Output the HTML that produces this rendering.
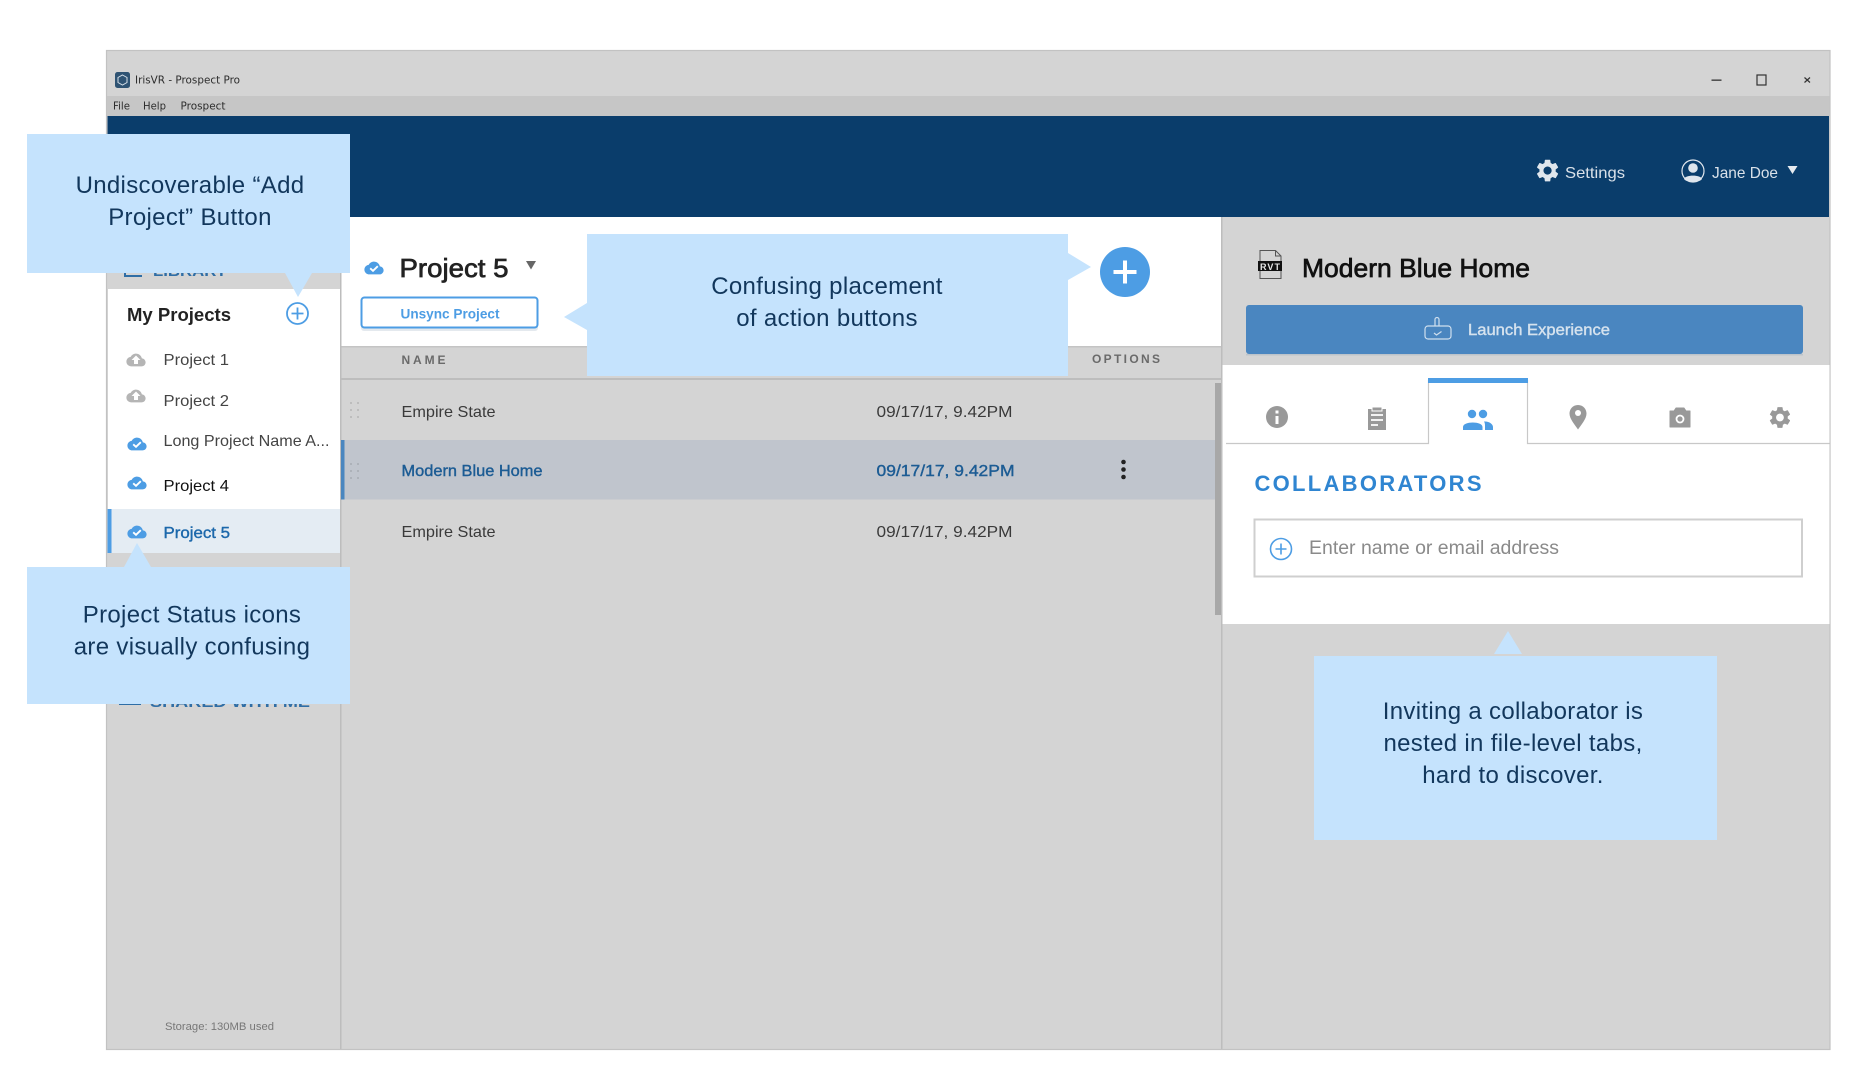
<!DOCTYPE html>
<html><head><meta charset="utf-8"><title>IrisVR - Prospect Pro</title>
<style>
html,body{margin:0;padding:0;background:#fff;width:1873px;height:1091px;overflow:hidden}
svg{display:block}
text{font-family:"Liberation Sans",sans-serif;white-space:pre}
.c{font-size:24px;fill:#12375c;text-anchor:middle;letter-spacing:.32px}
.m{stroke-width:.4px}
.h{stroke-width:.7px}
</style></head><body>
<svg xmlns="http://www.w3.org/2000/svg" width="1873" height="1091" viewBox="0 0 1873 1091">
<defs>
<path id="cl" transform="translate(-9.6,-9.6) scale(.8)" d="M19.35 10.04C18.67 6.59 15.64 4 12 4 9.11 4 6.6 5.64 5.35 8.04 2.34 8.36 0 10.91 0 14c0 3.31 2.69 6 6 6h13c2.76 0 5-2.24 5-5 0-2.64-2.05-4.78-4.65-4.96z"/>
<g id="up"><use href="#cl" fill="#b5b5b5"/><path d="M0,-4.500 L4.500,0 L2,0 L2,4 L-2,4 L-2,0 L-4.500,0Z" fill="#fff"/></g>
<g id="ok"><use href="#cl" fill="#4d9de4"/><path d="M-3.800,.3 L-1,2.800 L3.800,-1.800" fill="none" stroke="#fff" stroke-width="1.900"/></g>
<path id="gear" d="M19.14 12.94c.04-.3.06-.61.06-.94 0-.32-.02-.64-.07-.94l2.03-1.58c.18-.14.23-.41.12-.61l-1.92-3.32c-.12-.22-.37-.29-.59-.22l-2.39.96c-.5-.38-1.03-.7-1.62-.94l-.36-2.54c-.04-.24-.24-.41-.48-.41h-3.84c-.24 0-.43.17-.47.41l-.36 2.54c-.59.24-1.13.57-1.62.94l-2.39-.96c-.22-.08-.47 0-.59.22L2.74 8.87c-.12.21-.08.47.12.61l2.03 1.58c-.05.3-.09.63-.09.94s.02.64.07.94l-2.03 1.58c-.18.14-.23.41-.12.61l1.92 3.32c.12.22.37.29.59.22l2.39-.96c.5.38 1.03.7 1.62.94l.36 2.54c.05.24.24.41.48.41h3.84c.24 0 .44-.17.47-.41l.36-2.54c.59-.24 1.13-.56 1.62-.94l2.39.96c.22.08.47 0 .59-.22l1.92-3.32c.12-.22.07-.47-.12-.61l-2.01-1.58zM12 15.6c-1.98 0-3.6-1.62-3.6-3.6s1.62-3.6 3.6-3.6 3.6 1.62 3.6 3.6-1.62 3.6-3.6 3.6z"/>
<g id="drag"><rect x="0" y="0" width="2" height="2"/><rect x="7" y="0" width="2" height="2"/><rect x="0" y="7" width="2" height="2"/><rect x="7" y="7" width="2" height="2"/><rect x="0" y="14" width="2" height="2"/><rect x="7" y="14" width="2" height="2"/></g>
</defs>

<!-- window -->
<rect x="106.500" y="50.500" width="1723.500" height="999" fill="#d4d4d4" stroke="#c2c2c2" stroke-width="1.200"/>
<rect x="107" y="96" width="1722.500" height="20" fill="#c6c6c6"/>
<rect x="107.500" y="116" width="1721.500" height="101" fill="#0a3d6b"/>
<!-- title bar -->
<rect x="115" y="72" width="15" height="16" rx="2.500" fill="#2f5373"/>
<path d="M122.500,75 L127,77.500 V82.500 L122.500,85 L118,82.500 V77.500Z" fill="none" stroke="#d5dfe8" stroke-width="1"/>
<text x="135" y="83.500" font-size="11" textLength="105" lengthAdjust="spacingAndGlyphs" fill="#2c2c2c" style='font-family:"DejaVu Sans",sans-serif'>IrisVR - Prospect Pro</text>
<text x="113" y="109.500" font-size="11" textLength="17" lengthAdjust="spacingAndGlyphs" fill="#2c2c2c" style='font-family:"DejaVu Sans",sans-serif'>File</text>
<text x="143" y="109.500" font-size="11" textLength="23" lengthAdjust="spacingAndGlyphs" fill="#2c2c2c" style='font-family:"DejaVu Sans",sans-serif'>Help</text>
<text x="180.500" y="109.500" font-size="11" textLength="45" lengthAdjust="spacingAndGlyphs" fill="#2c2c2c" style='font-family:"DejaVu Sans",sans-serif'>Prospect</text>
<rect x="1711.500" y="79.500" width="10" height="1.300" fill="#333"/>
<rect x="1757" y="75" width="9" height="10" fill="none" stroke="#333" stroke-width="1.200"/>
<path d="M1804.500,77.500 L1810,82.500 M1810,77.500 L1804.500,82.500" stroke="#333" stroke-width="1.200"/>
<!-- header right -->
<use href="#gear" transform="translate(1534,157) scale(1.130)" fill="#dfe6ed"/>
<text x="1565" y="178" font-size="16" textLength="60" lengthAdjust="spacingAndGlyphs" fill="#d9e1e9">Settings</text>
<circle cx="1693" cy="171" r="11" fill="none" stroke="#dfe6ed" stroke-width="1.200"/>
<circle cx="1693" cy="168" r="4.800" fill="#dfe6ed"/>
<path d="M1684,179 C1685,174.500 1701,174.500 1702,179 C1699,183 1687,183 1684,179Z" fill="#dfe6ed"/>
<text x="1712" y="178" font-size="16" textLength="66" lengthAdjust="spacingAndGlyphs" fill="#d9e1e9">Jane Doe</text>
<polygon points="1787.500,166 1797.500,166 1792.500,174" fill="#e6ebf0"/>

<!-- sidebar -->
<rect x="108" y="289" width="232" height="264" fill="#fff"/>
<rect x="108" y="509" width="232" height="44" fill="#e4ecf3"/>
<rect x="107.500" y="509" width="4" height="44" fill="#4d9de4"/>
<rect x="340" y="217" width="1.500" height="832" fill="#bdbdbd"/>
<path d="M125,262 h17 M125,262 v14 h17" fill="none" stroke="#2f6ea6" stroke-width="2"/>
<text x="153" y="276" font-size="15" textLength="74" lengthAdjust="spacingAndGlyphs" fill="#2f6ea6" font-weight="bold">LIBRARY</text>
<text x="127" y="321" font-size="18" textLength="104" lengthAdjust="spacingAndGlyphs" fill="#222" font-weight="bold">My Projects</text>
<circle cx="297.500" cy="313.500" r="10.500" fill="#fff" stroke="#4d9de4" stroke-width="1.800"/>
<path d="M291.500,313.500 h12 M297.500,307.500 v12" stroke="#4d9de4" stroke-width="1.800"/>
<use href="#up" x="136" y="360"/>
<use href="#up" x="136" y="396"/>
<use href="#ok" x="137" y="444"/>
<use href="#ok" x="137" y="483"/>
<use href="#ok" x="137" y="532"/>
<text x="163.500" y="365" font-size="16" textLength="65.500" lengthAdjust="spacingAndGlyphs" fill="#444">Project 1</text>
<text x="163.500" y="406" font-size="16" textLength="65.500" lengthAdjust="spacingAndGlyphs" fill="#444">Project 2</text>
<text x="163.500" y="446" font-size="16" textLength="166" lengthAdjust="spacingAndGlyphs" fill="#444">Long Project Name A...</text>
<text x="163.500" y="491" font-size="16" textLength="65.500" lengthAdjust="spacingAndGlyphs" fill="#111">Project 4</text>
<text x="163.500" y="538" font-size="16" textLength="66.500" lengthAdjust="spacingAndGlyphs" fill="#1c68ab" stroke="#1c68ab" class="m">Project 5</text>
<rect x="119" y="700" width="22" height="5" fill="#2f6ea6"/>
<text x="150" y="707" font-size="15" textLength="160" lengthAdjust="spacingAndGlyphs" fill="#2f6ea6" font-weight="bold">SHARED WITH ME</text>
<text x="165" y="1030" font-size="11" textLength="109" lengthAdjust="spacingAndGlyphs" fill="#777">Storage: 130MB used</text>

<!-- main top -->
<rect x="341.500" y="217" width="879.500" height="129" fill="#fff"/>
<use href="#ok" x="374" y="268"/>
<text x="399.500" y="277" font-size="26" textLength="109" lengthAdjust="spacingAndGlyphs" fill="#222" stroke="#222" class="h">Project 5</text>
<polygon points="526,261 536,261 531,269.500" fill="#666"/>
<rect x="361" y="297" width="177" height="31" rx="3" fill="#e4e9ee" transform="translate(0,3)"/>
<rect x="361.500" y="297.500" width="176" height="30" rx="3" fill="#fff" stroke="#4d9de4" stroke-width="2"/>
<text x="400.500" y="318.500" font-size="14" textLength="99" lengthAdjust="spacingAndGlyphs" fill="#4d9de4" font-weight="bold">Unsync Project</text>
<circle cx="1125" cy="272" r="25" fill="#4d9de4"/>
<path d="M1113.500,272 h23 M1125,260.500 v23" stroke="#fff" stroke-width="4"/>

<!-- table -->
<rect x="341.500" y="346" width="879.500" height="1.500" fill="#c4c4c4"/>
<rect x="341.500" y="378" width="879.500" height="2" fill="#bdbdbd"/>
<text x="401.500" y="364" font-size="12" textLength="44" lengthAdjust="spacing" fill="#6a6a6a" font-weight="bold">NAME</text>
<text x="1092" y="363" font-size="12" textLength="68" lengthAdjust="spacing" fill="#6a6a6a" font-weight="bold">OPTIONS</text>
<rect x="341.500" y="440" width="873.500" height="59.500" fill="#c0c5cd"/>
<rect x="341" y="440" width="3.500" height="59.500" fill="#4a86bf"/>
<rect x="1215" y="383" width="6" height="232" fill="#a8a8a8"/>
<use href="#drag" x="350" y="402" fill="#bdbdbd"/>
<use href="#drag" x="350" y="463" fill="#adb2b9"/>
<text x="401.500" y="417" font-size="16" textLength="94" lengthAdjust="spacingAndGlyphs" fill="#3a3a3a">Empire State</text>
<text x="876.500" y="417" font-size="16" textLength="136" lengthAdjust="spacingAndGlyphs" fill="#3a3a3a">09/17/17, 9.42PM</text>
<text x="401.500" y="476" font-size="16" textLength="141" lengthAdjust="spacingAndGlyphs" fill="#1c5c94" stroke="#1c5c94" class="m">Modern Blue Home</text>
<text x="876.500" y="476" font-size="16" textLength="138" lengthAdjust="spacingAndGlyphs" fill="#1c5c94" stroke="#1c5c94" class="m">09/17/17, 9.42PM</text>
<circle cx="1123.500" cy="462" r="2.300" fill="#222"/><circle cx="1123.500" cy="469.500" r="2.300" fill="#222"/><circle cx="1123.500" cy="477" r="2.300" fill="#222"/>
<text x="401.500" y="537" font-size="16" textLength="94" lengthAdjust="spacingAndGlyphs" fill="#3a3a3a">Empire State</text>
<text x="876.500" y="537" font-size="16" textLength="136" lengthAdjust="spacingAndGlyphs" fill="#3a3a3a">09/17/17, 9.42PM</text>

<!-- right panel -->
<rect x="1221" y="217" width="1.500" height="832" fill="#bdbdbd"/>
<rect x="1222.500" y="365" width="607" height="259" fill="#fff"/>
<path d="M1260,250.500 H1275.500 L1281,256 V278.500 H1260Z M1275.500,250.500 V256 H1281" fill="none" stroke="#555" stroke-width="1"/>
<rect x="1258" y="261" width="24" height="10" fill="#111"/>
<text x="1260" y="270" font-size="9" textLength="20" lengthAdjust="spacing" fill="#e8e8e8" font-weight="bold">RVT</text>
<text x="1302" y="277" font-size="26" textLength="228" lengthAdjust="spacingAndGlyphs" fill="#111" stroke="#111" class="h">Modern Blue Home</text>
<rect x="1246" y="305" width="557" height="49" rx="3" fill="#4a86c0"/>
<rect x="1246" y="354" width="557" height="1.500" fill="#bcc3ca"/>
<path d="M1435,326 V319.500 a2,2 0 0 1 4,0 V326 M1428,326 H1448 a3,3 0 0 1 3,3 V336 a3,3 0 0 1 -3,3 H1428 a3,3 0 0 1 -3,-3 V329 a3,3 0 0 1 3,-3Z M1434,333 l2.500,2 l5,-3.500" fill="none" stroke="#cfdfee" stroke-width="1.200"/>
<text x="1468" y="335" font-size="16" textLength="142" lengthAdjust="spacingAndGlyphs" fill="#d5e2ee" stroke="#d5e2ee" class="m">Launch Experience</text>

<!-- tabs -->
<path d="M1226,443.500 H1428.500 V380 M1527.500,380 V443.500 H1829.500" fill="none" stroke="#c8c8c8" stroke-width="1.200"/>
<rect x="1428" y="378" width="100" height="5" fill="#4d9de4"/>
<circle cx="1277" cy="417" r="11" fill="#999"/>
<rect x="1275.500" y="416" width="3" height="8" fill="#fff"/><rect x="1275.500" y="410.500" width="3" height="3" fill="#fff"/>
<path d="M1368,409 H1386 V430 H1368Z" fill="#999"/>
<rect x="1372" y="407" width="10" height="4" fill="#999" stroke="#fff" stroke-width="1"/>
<path d="M1371,415 H1383 M1371,420 H1383 M1371,425 H1378" stroke="#fff" stroke-width="1.800"/>
<circle cx="1472" cy="414" r="4.200" fill="#4d9de4"/><circle cx="1483" cy="414" r="4.200" fill="#4d9de4"/>
<path d="M1463,430 V427 C1463,421 1482.500,421 1482.500,427 V430Z" fill="#4d9de4"/>
<path d="M1484,421.500 C1489,421 1493,424 1493,427 V430 H1485 V426.500 C1485,424.500 1485,423 1484,421.500Z" fill="#4d9de4"/>
<g transform="translate(1578,417)"><path d="M0,-12 C-5.500,-12 -8.500,-7.500 -8.500,-3.500 C-8.500,2 -3,8 0,12.500 C3,8 8.500,2 8.500,-3.500 C8.500,-7.500 5.500,-12 0,-12Z" fill="#999"/><circle cx="0" cy="-4" r="3" fill="#fff"/></g>
<path d="M1670,411 H1674 L1676,408 H1684 L1686,411 H1690 V427 H1670Z" fill="#999" stroke="#999" stroke-linejoin="round"/>
<circle cx="1680" cy="419" r="3.500" fill="none" stroke="#fff" stroke-width="1.800"/>
<use href="#gear" transform="translate(1767,404.500) scale(1.080)" fill="#999"/>

<text x="1254.500" y="491" font-size="22" textLength="227" lengthAdjust="spacing" fill="#2f85d1" font-weight="bold">COLLABORATORS</text>
<rect x="1254.500" y="519.500" width="547.500" height="57" fill="#fff" stroke="#cfcfcf" stroke-width="2"/>
<circle cx="1281" cy="549" r="10.500" fill="none" stroke="#4d9de4" stroke-width="1.600"/>
<path d="M1275.500,549 h11 M1281,543.500 v11" stroke="#4d9de4" stroke-width="1.600"/>
<text x="1309" y="554" font-size="19" textLength="250" lengthAdjust="spacingAndGlyphs" fill="#8a8a8a">Enter name or email address</text>

<!-- callouts -->
<g fill="#c5e3fd">
<rect x="27" y="134" width="323" height="139"/><polygon points="285,273 312,273 298,297"/>
<rect x="587" y="234" width="481" height="142"/><polygon points="587,303 587,330 564,317"/><polygon points="1068,253 1068,280 1091,267"/>
<rect x="27" y="567" width="323" height="137"/><polygon points="124,567 151,567 137,543"/>
<rect x="1314" y="656" width="403" height="184"/><polygon points="1494,654 1522,654 1508,631"/>
</g>
<text class="c" x="190" y="193">Undiscoverable “Add</text>
<text class="c" x="190" y="225">Project” Button</text>
<text class="c" x="827" y="294">Confusing placement</text>
<text class="c" x="827" y="326">of action buttons</text>
<text class="c" x="192" y="622.500">Project Status icons</text>
<text class="c" x="192" y="654.500">are visually confusing</text>
<text class="c" x="1513" y="719">Inviting a collaborator is</text>
<text class="c" x="1513" y="751">nested in file-level tabs,</text>
<text class="c" x="1513" y="783">hard to discover.</text>
</svg>
</body></html>
